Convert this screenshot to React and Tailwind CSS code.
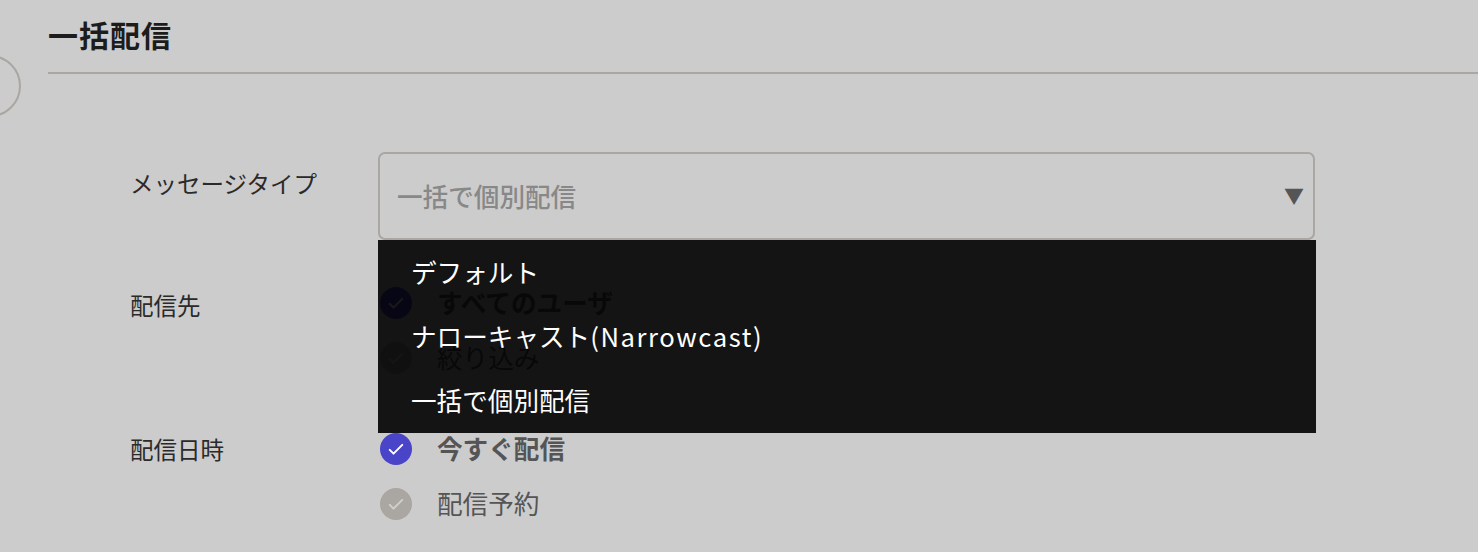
import { useState } from 'react';

const options = ['デフォルト', 'ナローキャスト', '一括で個別配信'];

function Check({ checked, label }) {
    return (
        <div className="flex items-center h-[55px]">
            <span className={`ml-[2px] w-[32px] h-[32px] rounded-full flex items-center justify-center ${checked ? 'bg-[#4a44c8]' : 'bg-[#aaa6a1]'}`}>
                <svg width="20" height="20" viewBox="0 0 24 24" fill="none" stroke={checked ? '#ffffff' : '#d2cfcb'} strokeWidth="2.4" strokeLinecap="round" strokeLinejoin="round">
                    <path d="M4.5 13l4.5 4.5L19.5 7" />
                </svg>
            </span>
            <span className={`ml-[25px] text-[25.6px] text-[#555555] ${checked ? 'font-bold' : 'font-normal'}`}>{label}</span>
        </div>
    );
}

export default function App() {
    const [value] = useState('一括で個別配信');

    return (
        <div className="relative w-full h-[552px] overflow-hidden bg-[#cccccc] font-['Noto_Sans_CJK_JP','Noto_Sans',sans-serif]">
            <div className="absolute left-[-41px] top-[55px] w-[62px] h-[62px] rounded-full border-2 border-[#aaa6a1]"></div>

            <div className="pl-[48px] pt-[14px]">
                <h1 className="text-[30px] leading-[40px] font-bold text-[#1c1c1c] tracking-[1px]">一括配信</h1>
                <div className="mt-[18px] h-[2px] bg-[#aaa6a1]"></div>
            </div>

            <div className="pl-[130px] pt-[78px]">
                <div className="flex items-start">
                    <div className="w-[248px] pt-[14px] text-[23.5px] leading-[34px] text-[#2a2a2a]">メッセージタイプ</div>
                    <div className="relative w-[937px]">
                        <div className="h-[88px] rounded-[7px] border-2 border-[#aaa6a1] flex items-center justify-between pl-[17px] pr-[9px]">
                            <span className="text-[25.6px] font-medium text-[#888888]">{value}</span>
                            <span className="text-[20px] text-[#555555]">▼</span>
                        </div>
                        <ul className="absolute z-10 left-0 top-[88px] w-[938px] h-[193px] bg-black/90">
                            {options.map((opt, i) => (
                                <li key={opt} className="h-[64px] flex items-center pl-[33px] text-[25.6px] text-white">
                                    {opt}
                                    {i === 1 && <span className="tracking-[1.6px]">(Narrowcast)</span>}
                                </li>
                            ))}
                        </ul>
                    </div>
                </div>

                <div className="flex items-start mt-[35px]">
                    <div className="w-[248px] h-[55px] flex items-center pt-[7px] text-[23.5px] text-[#2a2a2a]">配信先</div>
                    <div className="flex flex-col">
                        <Check checked label="すべてのユーザ" />
                        <Check label="絞り込み" />
                    </div>
                </div>

                <div className="flex items-start mt-[36px]">
                    <div className="w-[248px] h-[55px] flex items-center pt-[2px] text-[23.5px] text-[#2a2a2a]">配信日時</div>
                    <div className="flex flex-col">
                        <Check checked label="今すぐ配信" />
                        <Check label="配信予約" />
                    </div>
                </div>
            </div>
        </div>
    );
}
